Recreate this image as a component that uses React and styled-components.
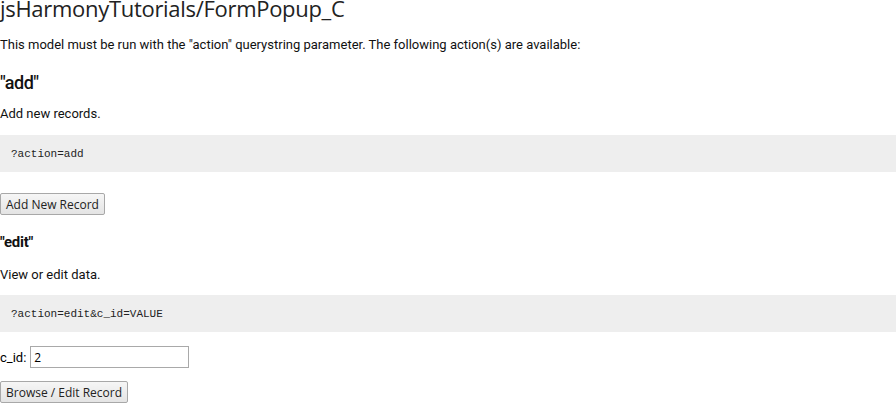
import React from 'react';
import styled, { createGlobalStyle } from 'styled-components';

const GlobalStyle = createGlobalStyle`
    html, body {
        margin: 0;
        padding: 0;
        background: #fff;
        color: #000;
        font-family: Roboto, "Liberation Sans", sans-serif;
        font-size: 13px;
    }
`;

const Page = styled.div`
    display: flex;
    flex-direction: column;
    width: 896px;
`;
const Title = styled.h1`
    margin: -6px 0 0 0;
    font-family: "Open Sans", "Noto Sans", sans-serif;
    font-weight: 400;
    font-size: 22px;
    line-height: 28px;
    color: #222;
    letter-spacing: -0.3px;
`;
const Text = styled.p`
    margin: ${({ top }) => top}px 0 0 0;
    font-size: 13px;
    line-height: 18px;
    color: #111;
`;
const ActionTitle = styled.h2`
    margin: ${({ top }) => top}px 0 0 0;
    font-family: Roboto, "Liberation Sans", sans-serif;
    font-weight: ${({ small }) => (small ? 700 : 500)};
    font-size: ${({ small }) => (small ? 15 : 18)}px;
    line-height: 22px;
    letter-spacing: ${({ small }) => (small ? -0.3 : -0.5)}px;
    color: #111;
`;
const CodeBlock = styled.pre`
    margin: ${({ top }) => top}px 0 0 0;
    padding: 0 11px;
    height: 37px;
    display: flex;
    align-items: center;
    background: #eee;
    font-family: "Liberation Mono", monospace;
    font-size: 11px;
    color: #222;
`;
const Button = styled.button`
    display: block;
    margin: ${({ top }) => top}px 0 0 0;
    padding: 0 5px;
    height: 22px;
    font-family: "Open Sans", "Noto Sans", sans-serif;
    font-size: 12px;
    color: #222;
    background: linear-gradient(#f6f6f6, #e4e4e4);
    border: 1px solid #a8a8a8;
    border-radius: 2px;
    align-self: flex-start;
`;
const Field = styled.label`
    display: flex;
    align-items: center;
    gap: 4px;
    margin-top: 14px;
    font-size: 13px;
`;
const Input = styled.input`
    box-sizing: border-box;
    width: 159px;
    height: 22px;
    padding: 0 3px;
    font-family: "Open Sans", "Noto Sans", sans-serif;
    font-size: 12px;
    border: 1px solid #a9a9a9;
`;

export default function App() {
    return (
        <Page>
            <GlobalStyle />
            <Title>jsHarmonyTutorials/FormPopup_C</Title>
            <Text top={14}>
                This model must be run with the "action" querystring parameter. The following action(s) are available:
            </Text>
            <ActionTitle top={18}>"add"</ActionTitle>
            <Text top={11}>Add new records.</Text>
            <CodeBlock top={12}>?action=add</CodeBlock>
            <Button top={21}>Add New Record</Button>
            <ActionTitle top={16} small>"edit"</ActionTitle>
            <Text top={13}>View or edit data.</Text>
            <CodeBlock top={11}>?action=edit&amp;c_id=VALUE</CodeBlock>
            <Field>
                c_id: <Input defaultValue="2" />
            </Field>
            <Button top={13}>Browse / Edit Record</Button>
        </Page>
    );
}
